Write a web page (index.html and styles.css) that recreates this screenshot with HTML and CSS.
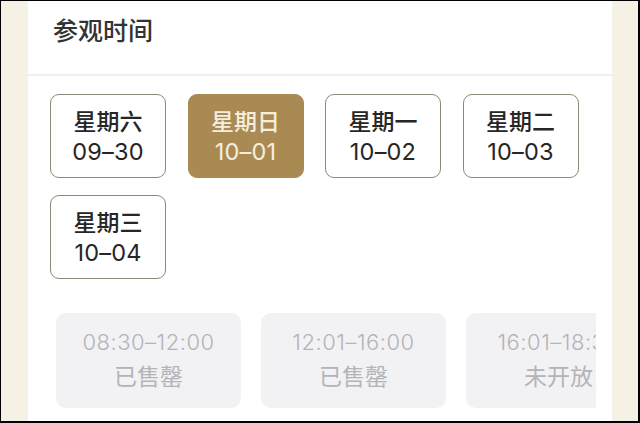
FILE: index.html
```html
<!DOCTYPE html>
<html lang="zh">
<head>
<meta charset="utf-8">
<link rel="stylesheet" href="styles.css">
</head>
<body>
<div class="frame">
  <div class="card">
    <div class="header">参观时间</div>
    <div class="dates">
      <div class="date"><span>星期六</span><span class="num">09–30</span></div>
      <div class="date selected"><span>星期日</span><span class="num">10–01</span></div>
      <div class="date"><span>星期一</span><span class="num">10–02</span></div>
      <div class="date"><span>星期二</span><span class="num">10–03</span></div>
      <div class="date"><span>星期三</span><span class="num">10–04</span></div>
    </div>
    <div class="slots">
      <div class="slot"><span class="num">08:30–12:00</span><span>已售罄</span></div>
      <div class="slot"><span class="num">12:01–16:00</span><span>已售罄</span></div>
      <div class="slot"><span class="num">16:01–18:30</span><span>未开放</span></div>
    </div>
  </div>
</div>
</body>
</html>
```

FILE: styles.css
```css
* { box-sizing: border-box; }
html, body { margin: 0; padding: 0; }
body {
  width: 640px;
  height: 423px;
  overflow: hidden;
  font-family: "Noto Sans CJK SC", "Noto Sans", sans-serif;
}
.frame {
  width: 640px;
  height: 423px;
  border-style: solid;
  border-color: #000;
  border-width: 1px 2px 2px 1px;
  background: #f5f1e5;
  padding-left: 27px;
  overflow: hidden;
}
.card {
  width: 584px;
  height: 100%;
  background: #fff;
}
.header {
  height: 75px;
  border-bottom: 2px solid #efefef;
  padding: 10px 0 0 25px;
  font-size: 25px;
  font-weight: 500;
  color: #333;
  line-height: 36px;
}
.num {
  font-family: Inter, Roboto, "Noto Sans CJK SC", sans-serif;
}
.dates {
  display: grid;
  grid-template-columns: repeat(4, 116px);
  column-gap: 21.5px;
  row-gap: 17px;
  padding: 18px 0 0 22px;
}
.date {
  height: 84px;
  border: 1.5px solid #8d8976;
  border-radius: 9px;
  display: flex;
  flex-direction: column;
  align-items: center;
  justify-content: center;
  font-size: 23px;
  font-weight: 500;
  color: #262626;
  line-height: 32px;
}
.date .num { font-size: 23.5px; font-weight: 400; letter-spacing: 0.2px; }
.date.selected {
  background: #a98a52;
  border-color: #a98a52;
  color: #f6eedd;
}
.slots {
  display: flex;
  gap: 20px;
  margin: 34px 0 0 28px;
  width: 540px;
  overflow: hidden;
}
.slot {
  flex: 0 0 185px;
  height: 95px;
  background: #f2f1f4;
  border-radius: 10px;
  display: flex;
  flex-direction: column;
  align-items: center;
  justify-content: center;
  padding-bottom: 4px;
  font-size: 23px;
  font-weight: 400;
  color: #b4b4b8;
  line-height: 33px;
  white-space: nowrap;
}
.slot .num { font-size: 22px; font-weight: 300; letter-spacing: 0.5px; }
```
